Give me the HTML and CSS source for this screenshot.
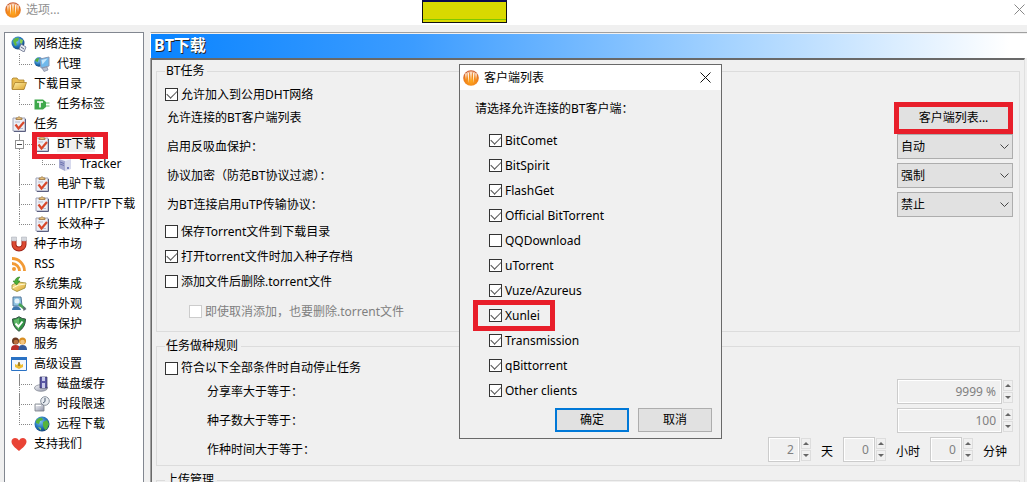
FILE: index.html
```html
<!DOCTYPE html>
<html lang="zh-CN">
<head>
<meta charset="utf-8">
<title>选项</title>
<link rel="stylesheet" href="styles.css">
</head>
<body>
<svg class="defs" aria-hidden="true">
  <defs>
    <radialGradient id="orange" cx="50%" cy="70%" r="65%"><stop offset="0" stop-color="#ffa81c"/><stop offset=".7" stop-color="#ee7d1c"/><stop offset="1" stop-color="#c9603a"/></radialGradient>
    <radialGradient id="ocean" cx="40%" cy="35%" r="70%"><stop offset="0" stop-color="#7cc4f0"/><stop offset=".6" stop-color="#2272b8"/><stop offset="1" stop-color="#123c70"/></radialGradient>
    <linearGradient id="fold" x1="0" y1="0" x2="1" y2="1"><stop offset="0" stop-color="#fff0a8"/><stop offset="1" stop-color="#dca32c"/></linearGradient>
    <linearGradient id="steel" x1="0" y1="0" x2="1" y2="1"><stop offset="0" stop-color="#fafafc"/><stop offset="1" stop-color="#8d92a6"/></linearGradient>
    <symbol id="i-logo" viewBox="0 0 16 16"><circle cx="8" cy="8" r="7.8" fill="url(#orange)"/><path d="M2 3.500h1.800L3 10zM4.300 2.500h2L5.500 13zM7 2h2L8 11zM9.700 2.500h2L10.500 13zM12.200 3.500H14L13 10z" fill="#fff0de"/><path d="M2 4.500Q8-1 14 4.500" stroke="#f6c3a0" fill="none"/></symbol>
    <symbol id="i-task" viewBox="0 0 16 16"><path d="M2 2h12v13H2z" fill="#eceef5" stroke="#a0a4b8"/><path d="M14.500 3v12.500H3" fill="none" stroke="#5b5f80"/><path d="M5 3.500V2h1.500L8 .5 9.500 2H11v1.500z" fill="#e5c07a" stroke="#9a7440" stroke-width=".8"/><path d="M4.500 8.500l3 4 5.500-6.500" fill="none" stroke="#d8482c" stroke-width="2.200"/><path d="M4 6h5M9 12.500h3" stroke="#b6bccf"/></symbol>
    <symbol id="i-globe" viewBox="0 0 16 16"><circle cx="8" cy="8" r="7.500" fill="url(#ocean)"/><path d="M2 5c2-3 4-3.500 6-3l1 2-3 1-1 3-3-1zM9 6l4-2 2 4-2 5-2 1-2-4z" fill="#56b43c"/><path d="M4 11l3 1v2.500z" fill="#9bd24c"/></symbol>
  </defs>
</svg>

<header class="titlebar">
  <svg class="icon"><use href="#i-logo"/></svg>
  <h1>选项...</h1>
  <button class="close" aria-label="关闭"><svg viewBox="0 0 11 11"><path d="M.5.5l10 10M10.500.5l-10 10"/></svg></button>
</header>
<div class="sticker" aria-hidden="true"></div>

<main class="window">
  <nav class="tree">
    <ul>
      <li><a href="#net"><svg class="icon" viewBox="0 0 16 16"><circle cx="7" cy="7" r="6.500" fill="url(#ocean)"/><path d="M2 5c1-3 4-4 6-3l-1 3-2 1 1 3-2 1z" fill="#62b840"/><path d="M9 3l3 1-1 4-2-1z" fill="#8ccf55"/><path d="M8 13l2-5 5 3-2 5z" fill="#e6eaf1" stroke="#626b88" stroke-width=".8"/><path d="M10 11l3 2" stroke="#626b88"/></svg>网络连接</a>
        <ul><li><a href="#proxy"><svg class="icon" viewBox="0 0 16 16"><circle cx="5" cy="6" r="4.700" fill="url(#ocean)"/><path d="M1 5c1-3 3-3 4-3l-1 4z" fill="#55ad3b"/><path d="M6 3l9-2v9l-8 2z" fill="#70b9ec" stroke="#8998b4"/><path d="M7.500 4l6-1.500-5 6z" fill="#c9e8fb"/><path d="M8 12l5-1 1 3-4 1.500z" fill="#b9c0cf" stroke="#7c86a0" stroke-width=".7"/></svg>代理</a></li></ul></li>
      <li><a href="#dir"><svg class="icon" viewBox="0 0 16 16"><path d="M1 13V3l1-1h4l1.500 2H13v9z" fill="#e9bd52" stroke="#a9802c" stroke-width=".8"/><path d="M1.200 13.500L4 6.500h11.500L13 13.500z" fill="url(#fold)" stroke="#a9802c" stroke-width=".8"/></svg>下载目录</a>
        <ul><li><a href="#tag"><svg class="icon" viewBox="0 0 16 16"><path d="M.5 3.500h8.500l3 2.500v5l-3 2.500H.5z" fill="#3ea84b"/><path d="M3 6h6M6 6v5.500" stroke="#fff" stroke-width="1.600"/><path d="M12 7h3.500M12 10h3.500" stroke="#61b96a"/></svg>任务标签</a></li></ul></li>
      <li><a href="#task"><svg class="icon"><use href="#i-task"/></svg>任务</a>
        <ul>
          <li class="parent"><span class="toggle"></span><a class="selected" href="#bt"><svg class="icon"><use href="#i-task"/></svg><span class="current">BT下载</span></a>
            <ul><li><a href="#tracker"><svg class="icon" viewBox="0 0 16 16"><path d="M2 3l7-2 5 2-6 2z" fill="#edf0fa"/><path d="M2 3l6 2v10l-6-3z" fill="#a7abd2"/><path d="M8 5l6-2v10l-6 2z" fill="#d7daee"/><path d="M3 6l4 1.500M3 8l4 1.500" stroke="#6d73b0"/><circle cx="11" cy="12" r="1" fill="#5660a8"/></svg>Tracker</a></li></ul></li>
          <li><a href="#ed2k"><svg class="icon"><use href="#i-task"/></svg>电驴下载</a></li>
          <li><a href="#http"><svg class="icon"><use href="#i-task"/></svg>HTTP/FTP下载</a></li>
          <li><a href="#long"><svg class="icon"><use href="#i-task"/></svg>长效种子</a></li>
        </ul></li>
      <li><a href="#market"><svg class="icon" viewBox="0 0 16 16"><path d="M3 4v4.500a5 4.500 0 0 0 10 0V4" fill="none" stroke="#9f2418" stroke-width="5"/><path d="M3 5v3.500a5 4.500 0 0 0 10 0V5" fill="none" stroke="#dc4a32" stroke-width="3.200"/><path d="M.5 1h5v4h-5zM10.500 1h5v4h-5z" fill="#d5d8de" stroke="#a4a8b0" stroke-width=".5"/></svg>种子市场</a></li>
      <li><a href="#rss"><svg class="icon" viewBox="0 0 16 16"><circle cx="3" cy="13" r="2" fill="#f29a35"/><path d="M1 7.500a7.500 7.500 0 0 1 7.500 7.500M1 2.500A12.500 12.500 0 0 1 13.500 15" fill="none" stroke="#f29a35" stroke-width="2.800"/></svg>RSS</a></li>
      <li><a href="#system"><svg class="icon" viewBox="0 0 16 16"><path d="M1 9l6-3 8 1-1 5-8 3.500L1 13z" fill="url(#fold)" stroke="#94892f" stroke-width=".8"/><path d="M1.500 12l6-3 7-1" fill="none" stroke="#fffbd0"/><path d="M9 1C6 1 4 3 4 5H2l3.500 4L9 5H7c0-2 1-3 2-4z" fill="#4bae35" stroke="#2b7c22" stroke-width=".6"/></svg>系统集成</a></li>
      <li><a href="#look"><svg class="icon" viewBox="0 0 16 16"><path d="M2 1h8l1 9H2z" fill="#8fc3e2" stroke="#54789c"/><circle cx="6" cy="5" r="2.500" fill="#e4f2fa"/><path d="M1 14c0-5 8-5 9 0z" fill="#3d75ad"/><path d="M8 8l6 5" stroke="#49a457" stroke-width="2.800"/><path d="M12 10l3.500 3-3 2z" fill="#5e6875"/></svg>界面外观</a></li>
      <li><a href="#virus"><svg class="icon" viewBox="0 0 16 16"><path d="M8 .7Q11 3 14.500 3 14.500 11 8 15.300 1.500 11 1.500 3 5 3 8 .7z" fill="#329445" stroke="#345043"/><path d="M8 2v12Q3 10 3 4q3-.3 5-2z" fill="#62b96a"/><path d="M4.500 7.500l3 3 4-5" fill="none" stroke="#fff" stroke-width="2"/></svg>病毒保护</a></li>
      <li><a href="#service"><svg class="icon" viewBox="0 0 16 16"><circle cx="4.500" cy="5" r="3.500" fill="#693a22"/><circle cx="5" cy="6" r="2.300" fill="#b96d3c"/><path d="M0 13q0-4 4.500-4T9 13v1H0z" fill="#b92f2a"/><circle cx="11.500" cy="5" r="3.500" fill="#d98f23"/><circle cx="11.500" cy="6" r="2.300" fill="#f4c581"/><path d="M7.500 13q0-4 4-4t4.500 4v1H7.500z" fill="#355a9b"/></svg>服务</a></li>
      <li><a href="#advanced"><svg class="icon" viewBox="0 0 16 16"><path d="M.5 1.500h15v13H.5z" fill="#f3f7fc" stroke="#2a72c4"/><path d="M0 1h16v3H0z" fill="#2a72c4"/><path d="M4 8l2 1 2-3 2 3 2-1v3l-4 2-4-2z" fill="#ecbc32"/><path d="M8 6v4" stroke="#58451f"/></svg>高级设置</a>
        <ul>
          <li><a href="#cache"><svg class="icon" viewBox="0 0 16 16"><ellipse cx="7" cy="12" rx="6.500" ry="3.300" fill="url(#steel)" stroke="#777c8a" stroke-width=".7"/><path d="M6 1h7v11H6z" fill="#5a58a5" stroke="#34355f" stroke-width=".7"/><path d="M8 1h3v4H8zM8 7h3v5H8z" fill="#c9cbea"/></svg>磁盘缓存</a></li>
          <li><a href="#speed"><svg class="icon" viewBox="0 0 16 16"><circle cx="11" cy="5" r="4.300" fill="#e8ecf1" stroke="#87909c"/><path d="M11 2v3.500L9 7" fill="none" stroke="#4b596d"/><path d="M1 8h7l2 2v5H1z" fill="url(#steel)" stroke="#777d87" stroke-width=".8"/><path d="M2 9.500h5" stroke="#fff"/></svg>时段限速</a></li>
          <li><a href="#remote"><svg class="icon"><use href="#i-globe"/></svg>远程下载</a></li>
        </ul></li>
      <li><a href="#support"><svg class="icon" viewBox="0 0 16 16"><path d="M8 15C4 11.500.5 9 .5 5.500.5 1.500 6 .5 8 4.500 10 .5 15.500 1.500 15.500 5.500 15.500 9 12 11.500 8 15z" fill="#e94335"/></svg>支持我们</a></li>
    </ul>
  </nav>

  <section class="page">
    <h2>BT下载</h2>
    <form class="sheet">
      <fieldset>
        <legend>BT任务</legend>
        <label class="check"><input type="checkbox" checked>允许加入到公用DHT网络</label>
        <div class="row clients"><label for="clients">允许连接的BT客户端列表</label><button type="button" id="clients" class="btn marked">客户端列表...</button></div>
        <div class="rows">
          <div class="row"><label for="leech">启用反吸血保护：</label><span class="combo"><select id="leech"><option>自动</option></select><svg viewBox="0 0 9 5"><path d="M.5.5l4 4 4-4"/></svg></span></div>
          <div class="row"><label for="crypt">协议加密（防范BT协议过滤）：</label><span class="combo"><select id="crypt"><option>强制</option></select><svg viewBox="0 0 9 5"><path d="M.5.5l4 4 4-4"/></svg></span></div>
          <div class="row"><label for="utp">为BT连接启用uTP传输协议：</label><span class="combo"><select id="utp"><option>禁止</option></select><svg viewBox="0 0 9 5"><path d="M.5.5l4 4 4-4"/></svg></span></div>
        </div>
        <label class="check"><input type="checkbox">保存Torrent文件到下载目录</label>
        <label class="check"><input type="checkbox" checked>打开torrent文件时加入种子存档</label>
        <label class="check"><input type="checkbox">添加文件后删除.torrent文件</label>
        <label class="check sub"><input type="checkbox" disabled>即使取消添加，也要删除.torrent文件</label>
      </fieldset>
      <fieldset class="seeding">
        <legend>任务做种规则</legend>
        <label class="check"><input type="checkbox">符合以下全部条件时自动停止任务</label>
        <div class="rows limits">
          <div class="row"><label for="ratio">分享率大于等于：</label><span class="spin wide"><input id="ratio" type="text" value="9999 %" disabled><span class="steps"><button type="button" class="up" aria-label="增加" disabled></button><button type="button" class="down" aria-label="减少" disabled></button></span></span></div>
          <div class="row"><label for="seeds">种子数大于等于：</label><span class="spin wide"><input id="seeds" type="text" value="100" disabled><span class="steps"><button type="button" class="up" aria-label="增加" disabled></button><button type="button" class="down" aria-label="减少" disabled></button></span></span></div>
          <div class="row"><label for="days">作种时间大于等于：</label>
            <div class="times">
              <span class="spin"><input id="days" type="text" value="2" disabled><span class="steps"><button type="button" class="up" aria-label="增加" disabled></button><button type="button" class="down" aria-label="减少" disabled></button></span></span><label for="days">天</label>
              <span class="spin"><input id="hours" type="text" value="0" disabled><span class="steps"><button type="button" class="up" aria-label="增加" disabled></button><button type="button" class="down" aria-label="减少" disabled></button></span></span><label for="hours">小时</label>
              <span class="spin"><input id="minutes" type="text" value="0" disabled><span class="steps"><button type="button" class="up" aria-label="增加" disabled></button><button type="button" class="down" aria-label="减少" disabled></button></span></span><label for="minutes">分钟</label>
            </div></div>
        </div>
      </fieldset>
      <fieldset><legend>上传管理</legend></fieldset>
    </form>
  </section>
</main>

<div class="dialog" role="dialog" aria-labelledby="dialog-title">
  <div class="dialog-title">
    <svg class="icon"><use href="#i-logo"/></svg>
    <h2 id="dialog-title">客户端列表</h2>
    <button class="close" aria-label="关闭"><svg viewBox="0 0 11 11"><path d="M.5.5l10 10M10.500.5l-10 10"/></svg></button>
  </div>
  <p>请选择允许连接的BT客户端：</p>
  <div class="choices">
    <label class="check"><input type="checkbox" checked>BitComet</label>
    <label class="check"><input type="checkbox" checked>BitSpirit</label>
    <label class="check"><input type="checkbox" checked>FlashGet</label>
    <label class="check"><input type="checkbox" checked>Official BitTorrent</label>
    <label class="check"><input type="checkbox">QQDownload</label>
    <label class="check"><input type="checkbox" checked>uTorrent</label>
    <label class="check"><input type="checkbox" checked>Vuze/Azureus</label>
    <label class="check boxed"><input type="checkbox" checked>Xunlei</label>
    <label class="check"><input type="checkbox" checked>Transmission</label>
    <label class="check"><input type="checkbox" checked>qBittorrent</label>
    <label class="check"><input type="checkbox" checked>Other clients</label>
  </div>
  <div class="actions"><button class="btn primary">确定</button><button class="btn">取消</button></div>
</div>
</body>
</html>
```
FILE: styles.css
```css
*, *::before, *::after { box-sizing: border-box; }
body {
  margin: 0;
  height: 100vh;
  overflow: hidden;
  display: flex;
  flex-direction: column;
  background: #f0f0f0;
  color: #000;
  font: 12px/16px "Noto Sans", "Noto Sans CJK SC", sans-serif;
}
button, input, select { font: inherit; color: inherit; margin: 0; }
h1, h2, p { margin: 0; font-size: 12px; font-weight: 400; }
ul { list-style: none; margin: 0; padding: 0; }
.defs { position: absolute; width: 0; height: 0; }
.icon { width: 16px; height: 16px; flex: none; }

.titlebar {
  flex: none;
  display: flex;
  align-items: center;
  gap: 5px;
  height: 25px;
  padding: 0 2px 6px 5px;
  background: #fff;
}
.titlebar h1 { color: #909090; }
.close { margin-left: auto; padding: 0; border: 0; background: none; display: flex; }
.close svg { width: 11px; height: 11px; fill: none; stroke: #111; }
.titlebar .close svg { stroke: #888; }
.sticker {
  position: absolute;
  left: 422px;
  top: 0;
  width: 85px;
  height: 23px;
  background: linear-gradient(#7cc800, #7cc800) 0 17px / 100% 1px no-repeat, #d9d900;
  border: 1px solid #101010;
  border-top: 2px solid #0a0a50;
}

.window { flex: 1; min-height: 0; display: flex; gap: 6px; padding: 7px 0 0 4px; }

.tree {
  flex: none;
  width: 140px;
  padding: 1px 0 0 6px;
  background: #fff;
  border: 1px solid #828790;
  border-bottom: 0;
}
.tree a {
  display: flex;
  align-items: center;
  gap: 7px;
  height: 20px;
  color: #000;
  text-decoration: none;
  white-space: nowrap;
}
.tree ul ul { padding-left: 23px; }
.tree li { position: relative; }
.tree ul ul > li::before {
  content: "";
  position: absolute;
  left: -15px;
  top: 0;
  width: 13px;
  height: 11px;
  border: dotted #888;
  border-width: 0 0 1px 1px;
}
.tree ul ul > li:not(:last-child)::after {
  content: "";
  position: absolute;
  left: -15px;
  top: 0;
  height: 100%;
  border-left: 1px dotted #888;
}
.toggle {
  position: absolute;
  z-index: 1;
  left: -19px;
  top: 6px;
  width: 9px;
  height: 9px;
  border: 1px solid #919191;
  background: linear-gradient(#444, #444) center / 5px 1px no-repeat, #fff;
}
.current { background: #f0f0f0; }
.selected::after {
  content: "";
  position: absolute;
  z-index: 1;
  left: -2px;
  top: -2px;
  width: 76px;
  height: 27px;
  border: 5px solid #e81e2a;
}

.page {
  flex: 1;
  min-width: 0;
  display: flex;
  flex-direction: column;
  border-top: 1px solid #a0a0a0;
  border-left: 1px solid #fff;
}
.page > h2 {
  flex: none;
  height: 24px;
  margin-top: 1px;
  padding-left: 3px;
  color: #fff;
  font-size: 16px;
  line-height: 23px;
  font-weight: 700;
  text-shadow: 1px 1px 0 #222;
  background: linear-gradient(90deg, #0a84ff, #3c9cff 30%, #a5d3ff 66%, #fff 98%);
}
.sheet {
  flex: 1;
  min-height: 0;
  display: flex;
  flex-direction: column;
  gap: 6px;
  margin-right: 2px;
  padding: 3px 4px 0 4px;
  border: 1px solid #696969;
  border-top-width: 2px;
  border-right-color: #e0e0e0;
  border-bottom: 0;
  box-shadow: -1px 0 #a0a0a0;
}
fieldset {
  flex: none;
  min-width: 0;
  margin: 0;
  padding: 3px 6px 7px 8px;
  border: 1px solid #dcdcdc;
}
legend { padding: 0 3px 0 1px; }
.check { display: flex; align-items: center; gap: 3px; height: 25px; width: max-content; }
.check input {
  appearance: none;
  width: 13px;
  height: 13px;
  border: 1px solid #333;
  background: #fff;
  display: grid;
  place-items: center;
}
.check input:checked::before {
  content: "";
  width: 10px;
  height: 6px;
  margin-bottom: 3px;
  border: solid #555;
  border-width: 0 0 1px 1px;
  transform: rotate(-45deg);
}
.check input:disabled { border-color: #ccc; }
.sub { margin: 5px 0 0 24px; color: #808080; }
.row { display: flex; align-items: center; justify-content: space-between; height: 25px; padding-left: 2px; }
.rows { display: grid; gap: 4px; margin-bottom: 2px; }
.clients { height: 22px; margin-bottom: 5px; }
.btn {
  width: 74px;
  height: 24px;
  padding: 0;
  background: #e1e1e1;
  border: 1px solid #adadad;
}
.btn.marked { width: 109px; height: 22px; margin-right: 5px; border: 0; outline: 5px solid #e81e2a; }
.combo { position: relative; width: 116px; height: 25px; }
.combo select {
  appearance: none;
  width: 100%;
  height: 100%;
  padding: 0 3px;
  border: 1px solid #adadad;
  border-radius: 0;
  background: #e1e1e1;
}
.combo svg {
  position: absolute;
  right: 4px;
  top: 10px;
  width: 9px;
  height: 5px;
  fill: none;
  stroke: #444;
  pointer-events: none;
}
.seeding { padding-bottom: 3px; }
.seeding .check { height: 22px; }
.limits { margin: 0; padding-left: 40px; }
.spin { display: flex; align-items: center; gap: 1px; }
.spin input {
  width: 32px;
  height: 25px;
  padding: 0 5px;
  text-align: right;
  color: #808080;
  background: #f0f0f0;
  border: 1px solid #ccc;
  box-shadow: inset 0 0 0 1px #fff;
}
.spin.wide input { width: 105px; }
.steps { display: grid; gap: 1px; }
.steps button { display: grid; place-items: center; width: 10px; height: 11px; padding: 0; border: 1px solid #ddd; background: #f0f0f0; }
.steps button::before { content: ""; border: solid transparent; border-width: 0 3px; }
.steps .up::before { border-bottom: 3px solid #666; }
.steps .down::before { border-top: 3px solid #666; }
.times { display: flex; align-items: center; gap: 10px; margin-right: 6px; }
.times > label { padding-top: 5px; }

.dialog {
  position: absolute;
  left: 459px;
  top: 64px;
  width: 263px;
  border: 1px solid #696969;
  background: #f0f0f0;
}
.dialog-title { display: flex; align-items: center; gap: 5px; height: 25px; padding: 0 10px 0 3px; background: #fff; }
.dialog p { padding: 11px 15px 11px; }
.choices { padding-left: 29px; }
.boxed { position: relative; }
.boxed::after {
  content: "";
  position: absolute;
  left: -16px;
  top: -3px;
  width: 82px;
  height: 31px;
  border: 5px solid #e81e2a;
}
.actions { display: flex; justify-content: flex-end; gap: 9px; padding: 5px 9px 6px; }
.primary { border: 2px solid #0078d7; }
```
